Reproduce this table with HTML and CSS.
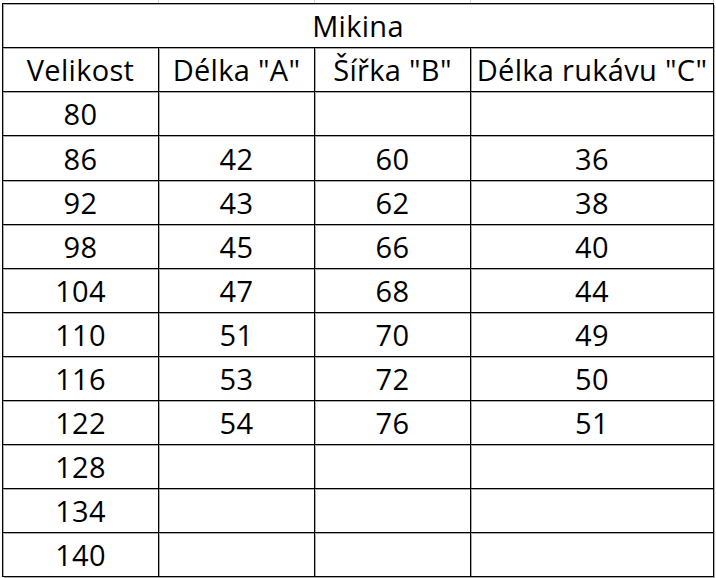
FILE: index.html
```html
<!DOCTYPE html>
<html lang="cs">
<head>
<meta charset="utf-8">
<title>Mikina</title>
<link rel="stylesheet" href="styles.css">
</head>
<body>
<div class="sheet">
  <div class="gridlines">
    <span></span><span></span><span></span><span></span>
  </div>
  <div class="table">
    <div class="cell title">Mikina</div>

    <div class="cell">Velikost</div>
    <div class="cell">Délka "A"</div>
    <div class="cell">Šířka "B"</div>
    <div class="cell">Délka rukávu "C"</div>

    <div class="cell">80</div><div class="cell"></div><div class="cell"></div><div class="cell"></div>
    <div class="cell">86</div><div class="cell">42</div><div class="cell">60</div><div class="cell">36</div>
    <div class="cell">92</div><div class="cell">43</div><div class="cell">62</div><div class="cell">38</div>
    <div class="cell">98</div><div class="cell">45</div><div class="cell">66</div><div class="cell">40</div>
    <div class="cell">104</div><div class="cell">47</div><div class="cell">68</div><div class="cell">44</div>
    <div class="cell">110</div><div class="cell">51</div><div class="cell">70</div><div class="cell">49</div>
    <div class="cell">116</div><div class="cell">53</div><div class="cell">72</div><div class="cell">50</div>
    <div class="cell">122</div><div class="cell">54</div><div class="cell">76</div><div class="cell">51</div>
    <div class="cell">128</div><div class="cell"></div><div class="cell"></div><div class="cell"></div>
    <div class="cell">134</div><div class="cell"></div><div class="cell"></div><div class="cell"></div>
    <div class="cell">140</div><div class="cell"></div><div class="cell"></div><div class="cell"></div>
  </div>
</div>
</body>
</html>
```

FILE: styles.css
```css
html, body {
  margin: 0;
  padding: 0;
  background: #ffffff;
}

.sheet {
  width: 716px;
  height: 578px;
  overflow: hidden;
  font-family: "Open Sans", "Liberation Sans", sans-serif;
  font-size: 29px;
  letter-spacing: 0.3px;
  color: #000000;
}

.gridlines {
  display: grid;
  grid-template-columns: 156px 156px 156px 243px;
  height: 3px;
  padding-left: 3px;
}

.gridlines span {
  border-right: 1px solid #d4d4d4;
}

.table {
  display: grid;
  grid-template-columns: 156px 156px 156px 243px;
  grid-template-rows: 44px 44px 44px 45px repeat(9, 44px);
  margin-left: 2px;
  width: max-content;
  border-left: 1px solid #000000;
  border-top: 1px solid #000000;
  box-shadow: inset 1px 1px 0 #aaaaaa;
}

.cell {
  border-right: 1px solid #000000;
  border-bottom: 1px solid #000000;
  box-shadow: 1px 1px 0 #aaaaaa;
  display: flex;
  align-items: flex-end;
  justify-content: center;
  line-height: 29px;
  padding-bottom: 7px;
  white-space: nowrap;
}

.title {
  grid-column: 1 / 5;
}
```
